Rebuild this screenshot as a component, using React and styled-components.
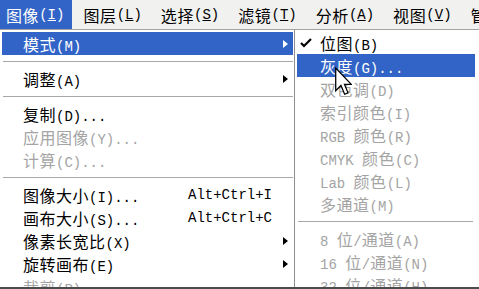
import React from "react";
import styled, { createGlobalStyle } from "styled-components";

const Global = createGlobalStyle`
  html, body { margin: 0; padding: 0; background: #ffffff; overflow: hidden; }
  #root { width: 479px; height: 289px; }
`;

const BLUE = "#3164c6";
const GRAY_TEXT = "#a4a4a4";

const Screen = styled.div`
  position: relative;
  width: 479px;
  height: 289px;
  box-sizing: border-box;
  border-bottom: 2px solid #4c4c4c;
  overflow: hidden;
  display: flex;
  flex-direction: column;
  font-family: "Noto Sans CJK SC", "Liberation Sans", sans-serif;
  font-size: 16px;
  color: #000;
  background: #fff;
`;

const MenuBar = styled.div`
  flex: 0 0 auto;
  height: 30px;
  box-sizing: border-box;
  display: flex;
  align-items: stretch;
  gap: 5px;
  background: #f1f1ef;
  border-bottom: 1px solid #a3a3a3;
  white-space: nowrap;
`;

const BarItem = styled.div`
  display: flex;
  align-items: center;
  padding: 0 8px 0 6px;
  letter-spacing: 0.6px;
  background: ${(p) => (p.$active ? BLUE : "transparent")};
  color: ${(p) => (p.$active ? "#fff" : "#000")};
`;

const Lat = styled.span`
  font-family: "Liberation Mono", monospace;
  font-size: 14px;
  letter-spacing: 0;
`;

const Panels = styled.div`
  flex: 1 1 auto;
  min-height: 0;
  display: flex;
  overflow: hidden;
`;

const MainMenu = styled.div`
  flex: 0 0 295px;
  box-sizing: border-box;
  padding: 2px 1px 0 2px;
  border-right: 1px solid #8e8e8e;
  display: flex;
  flex-direction: column;
`;

const SubMenu = styled.div`
  flex: 1 1 auto;
  box-sizing: border-box;
  padding: 1px 4px 0 2px;
  display: flex;
  flex-direction: column;
`;

const Row = styled.div`
  flex: 0 0 23px;
  height: 23px;
  display: grid;
  grid-template-columns: ${(p) => (p.$sub ? "23px 1fr" : "21px 1fr 89px 16px")};
  align-items: center;
  white-space: nowrap;
  letter-spacing: 0.5px;
  background: ${(p) => (p.$hl ? BLUE : "transparent")};
  color: ${(p) => (p.$hl ? "#fff" : p.$off ? GRAY_TEXT : "#000")};
`;

const Sep = styled.div`
  flex: 0 0 12px;
  display: flex;
  align-items: center;
  padding: 0 ${(p) => (p.$sub ? "2px 0 1px" : "0 0 1px")};
  &::after {
    content: "";
    flex: 1;
    height: 1px;
    background: #a8a8a8;
  }
`;

const Label = styled.span`
  grid-column: 2;
`;

const Shortcut = styled.span`
  grid-column: 3;
  font-family: "Liberation Mono", monospace;
  font-size: 14px;
  letter-spacing: 0;
`;

const ArrowCell = styled.span`
  grid-column: 4;
  display: flex;
  align-items: center;
  justify-content: center;
`;

const CheckCell = styled.span`
  grid-column: 1;
  display: flex;
  align-items: center;
  padding-left: 3px;
`;

const Cursor = styled.svg`
  position: absolute;
  left: 335px;
  top: 67px;
`;

function T({ text }) {
  return text
    .split(/([\x20-\x7e]+)/)
    .filter(Boolean)
    .map((s, i) =>
      /[\x20-\x7e]/.test(s) ? <Lat key={i}>{s}</Lat> : <span key={i}>{s}</span>
    );
}

const Arrow = ({ color }) => (
  <svg width="5" height="8" viewBox="0 0 5 8">
    <path d="M0 0 L5 4 L0 8 Z" fill={color} />
  </svg>
);

const Check = () => (
  <svg width="12" height="10" viewBox="0 0 12 10">
    <path d="M1 5 L4 8 L11 1" fill="none" stroke="#000" strokeWidth="2.2" />
  </svg>
);

const barItems = [
  ["图像", "I"],
  ["图层", "L"],
  ["选择", "S"],
  ["滤镜", "T"],
  ["分析", "A"],
  ["视图", "V"],
  ["管", ""],
];

const mainItems = [
  { t: "模式(M)", arrow: true, hl: true },
  { sep: true },
  { t: "调整(A)", arrow: true },
  { sep: true },
  { t: "复制(D)..." },
  { t: "应用图像(Y)...", off: true },
  { t: "计算(C)...", off: true },
  { sep: true },
  { t: "图像大小(I)...", key: "Alt+Ctrl+I" },
  { t: "画布大小(S)...", key: "Alt+Ctrl+C" },
  { t: "像素长宽比(X)", arrow: true },
  { t: "旋转画布(E)", arrow: true },
  { t: "裁剪(P)", off: true },
];

const subItems = [
  { t: "位图(B)", check: true },
  { t: "灰度(G)...", hl: true },
  { t: "双色调(D)", off: true },
  { t: "索引颜色(I)", off: true },
  { t: "RGB 颜色(R)", off: true },
  { t: "CMYK 颜色(C)", off: true },
  { t: "Lab 颜色(L)", off: true },
  { t: "多通道(M)", off: true },
  { sep: true },
  { t: "8 位/通道(A)", off: true },
  { t: "16 位/通道(N)", off: true },
  { t: "32 位/通道(H)", off: true },
];

export default function App() {
  return (
    <>
      <Global />
      <Screen>
        <MenuBar>
          {barItems.map(([name, acc], i) => (
            <BarItem key={name} $active={i === 0}>
              <span>{name}</span>
              {acc && (
                <Lat>
                  (<u>{acc}</u>)
                </Lat>
              )}
            </BarItem>
          ))}
        </MenuBar>
        <Panels>
          <MainMenu>
            {mainItems.map((it, i) =>
              it.sep ? (
                <Sep key={i} />
              ) : (
                <Row key={i} $hl={it.hl} $off={it.off}>
                  <Label>
                    <T text={it.t} />
                  </Label>
                  {it.key && <Shortcut>{it.key}</Shortcut>}
                  {it.arrow && (
                    <ArrowCell>
                      <Arrow color={it.hl ? "#fff" : "#000"} />
                    </ArrowCell>
                  )}
                </Row>
              )
            )}
          </MainMenu>
          <SubMenu>
            {subItems.map((it, i) =>
              it.sep ? (
                <Sep key={i} $sub />
              ) : (
                <Row key={i} $sub $hl={it.hl} $off={it.off}>
                  {it.check && (
                    <CheckCell>
                      <Check />
                    </CheckCell>
                  )}
                  <Label>
                    <T text={it.t} />
                  </Label>
                </Row>
              )
            )}
          </SubMenu>
        </Panels>
        <Cursor width="17" height="29" viewBox="0 0 12 20">
          <path
            d="M0.5 0.5 L0.5 16.5 L4.2 12.8 L6.8 19 L9.2 18 L6.7 12 L11.5 12 Z"
            fill="#fff"
            stroke="#000"
            strokeWidth="0.9"
            strokeLinejoin="miter"
          />
        </Cursor>
      </Screen>
    </>
  );
}
